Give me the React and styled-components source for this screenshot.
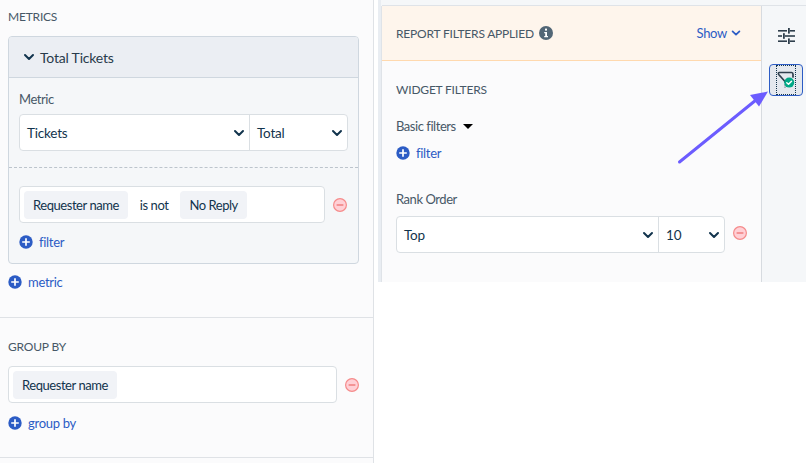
import React from 'react';
import styled, { createGlobalStyle } from 'styled-components';

const Global = createGlobalStyle`
  html, body { margin: 0; padding: 0; background: #fff; }
  body { font-family: Lato, "Liberation Sans", sans-serif; color: #12344d; }
  * { box-sizing: border-box; }
`;

const Page = styled.div`
  position: relative;
  width: 806px;
  height: 463px;
  overflow: hidden;
  display: grid;
  grid-template-columns: 374px 1fr;
  background: #fff;
`;
const LeftPanel = styled.aside`
  background: #fbfbfc;
  border-right: 1px solid #dfe2e6;
  height: 463px;
`;
const Section = styled.section`
  padding: ${p => p.$pad};
  height: ${p => p.$h}px;
  border-bottom: 1px solid #dfe2e6;
`;
const Heading = styled.h3`
  margin: 0;
  font-size: 12px;
  font-weight: 400;
  letter-spacing: -0.2px;
  line-height: 18px;
  color: #475867;
  text-transform: uppercase;
`;
const Card = styled.div`
  margin-top: 10px;
  width: 351px;
  height: 228px;
  border: 1px solid #cfd7df;
  border-radius: 4px;
  background: #f5f7f9;
  overflow: hidden;
`;
const CardHead = styled.div`
  height: 41px;
  background: #ebeef3;
  border-bottom: 1px solid #cfd7df;
  display: flex;
  align-items: center;
  gap: 4px;
  padding-left: 13px;
  font-size: 14px;
  letter-spacing: -0.2px;
  color: #283b4b;
`;
const CardBody = styled.div`
  padding: 12px 10px 0;
  height: 90px;
  border-bottom: 1px dashed #bcc4cc;
`;
const FieldLabel = styled.div`
  font-size: 13px;
  letter-spacing: -0.45px;
  line-height: 18px;
  color: #475867;
  margin-top: ${p => p.$mt ?? 0}px;
`;
const SelectGroup = styled.div`
  margin-top: ${p => p.$mt ?? 0}px;
  width: ${p => p.$w}px;
  height: 37px;
  display: flex;
  background: #fff;
  border: 1px solid #dadfe3;
  border-radius: 4px;
`;
const SelectCell = styled.div`
  flex: ${p => (p.$w ? `0 0 ${p.$w}px` : 1)};
  display: flex;
  align-items: center;
  justify-content: space-between;
  padding: 0 3px 0 7px;
  font-size: 13.5px;
  letter-spacing: -0.2px;
  color: #12344d;
  & + & { border-left: 1px solid #dadfe3; }
`;
const FilterRow = styled.div`
  display: flex;
  align-items: center;
  gap: 8px;
  margin-top: ${p => p.$mt ?? 0}px;
`;
const TokenBox = styled.div`
  width: ${p => p.$w}px;
  height: 37px;
  display: flex;
  align-items: center;
  padding: 0 4px;
  background: #fff;
  border: 1px solid #dadfe3;
  border-radius: 4px;
  font-size: 13px;
  letter-spacing: -0.45px;
  color: #12344d;
`;
const Chip = styled.span`
  height: 28px;
  display: inline-flex;
  align-items: center;
  padding: 0 9px;
  background: #f1f3f7;
  border-radius: 4px;
`;
const Operator = styled.span`
  padding: 0 12px;
`;
const AddLink = styled.div`
  display: flex;
  align-items: center;
  gap: 6px;
  margin-top: ${p => p.$mt ?? 0}px;
  height: 18px;
  font-size: 13px;
  letter-spacing: -0.3px;
  color: #2c5cc5;
`;
const Nested = styled.div`
  padding: 18px 10px 0;
`;
const MainColumn = styled.main`
  height: 282px;
  background: linear-gradient(90deg, #fff 0 4px, #e9edf2 4px 7px, #f5f7f9 7px);
  padding-left: 7px;
  display: flex;
  flex-direction: column;
`;
const TopStrip = styled.div`
  height: 6px;
  flex: none;
  background: #f5f7f9;
  border-bottom: 1px solid #dfe3e8;
  margin-left: 1px;
`;
const MainRow = styled.div`
  flex: 1;
  display: grid;
  grid-template-columns: 381px 1fr;
  min-height: 0;
`;
const FilterPanel = styled.div`
  background: #fbfbfc;
  border-left: 1px solid #dfe3e8;
  border-right: 1px solid #d7dbe0;
  min-height: 0;
`;
const Banner = styled.div`
  height: 55px;
  background: #fef5ec;
  border-bottom: 1px solid #ffd9ae;
  display: flex;
  align-items: center;
  justify-content: space-between;
  padding: 0 19px 0 14px;
`;
const BannerTitle = styled.div`
  display: flex;
  align-items: center;
  gap: 5px;
  font-size: 12px;
  letter-spacing: -0.2px;
  color: #475867;
`;
const ShowLink = styled.div`
  display: flex;
  align-items: center;
  gap: 3px;
  font-size: 13px;
  letter-spacing: -0.3px;
  color: #2c5cc5;
`;
const PanelBody = styled.div`
  padding: 20px 14px 0;
`;
const BasicFilters = styled.div`
  display: flex;
  align-items: center;
  gap: 7px;
  margin-top: 18px;
  font-size: 13px;
  letter-spacing: -0.45px;
  line-height: 18px;
  color: #475867;
`;
const Caret = styled.span`
  width: 0;
  height: 0;
  border-left: 5px solid transparent;
  border-right: 5px solid transparent;
  border-top: 5px solid #000;
`;
const RemoveSlot = styled.span`
  display: flex;
  margin-bottom: 3px;
`;
const Rail = styled.div`
  background: #f5f7f9;
  display: flex;
  flex-direction: column;
  align-items: center;
  padding: 22px 0 0 4px;
  gap: 20px;
`;
const RailButton = styled.div`
  width: 34px;
  height: 32px;
  flex: none;
  display: flex;
  justify-content: center;
  border: 1px solid #2c5cc5;
  border-radius: 4px;
  background: #e4e8ee;
`;
const FocusRing = styled.div`
  width: 20px;
  height: 30px;
  display: flex;
  align-items: center;
  justify-content: center;
  border: 1px dotted #12344d;
`;
const ArrowOverlay = styled.svg`
  position: absolute;
  left: 670px;
  top: 85px;
  pointer-events: none;
`;

const Chevron = ({ size = 14, color = '#12344d' }) => (
  <svg width={size} height={size} viewBox="0 0 14 14" fill="none" stroke={color} strokeWidth="2" strokeLinecap="round" strokeLinejoin="round" style={{ flex: 'none' }}>
    <path d="M3 5l4 4 4-4" />
  </svg>
);
const Plus = () => (
  <svg width="14" height="14" viewBox="0 0 14 14" style={{ flex: 'none' }}>
    <circle cx="7" cy="7" r="6.7" fill="#2c5cc5" />
    <path d="M3.2 7h7.6M7 3.2v7.6" stroke="#fff" strokeWidth="1.7" />
  </svg>
);
const Remove = () => (
  <svg width="14" height="14" viewBox="0 0 14 14" style={{ flex: 'none' }}>
    <circle cx="7" cy="7" r="6.4" fill="#ffd0d6" stroke="#f58b8b" strokeWidth="1.2" />
    <path d="M3.6 7h6.8" stroke="#f07f7f" strokeWidth="1.5" />
  </svg>
);
const Info = () => (
  <svg width="14" height="14" viewBox="0 0 14 14">
    <circle cx="7" cy="7" r="7" fill="#526676" />
    <rect x="6" y="2.6" width="2" height="2" fill="#fff" />
    <path d="M5.2 6h2.8v4h1v1.2H5.2V10h1V7.2h-1z" fill="#fff" />
  </svg>
);
const Sliders = () => (
  <svg width="17" height="16" viewBox="0 0 17 16" fill="#2f3f4d" style={{ flex: 'none' }}>
    <rect x="0" y="2" width="9" height="1.6" />
    <rect x="12" y="2" width="5" height="1.6" />
    <rect x="10" y="0" width="1.8" height="5.6" />
    <rect x="0" y="7.2" width="4" height="1.6" />
    <rect x="7" y="7.2" width="10" height="1.6" />
    <rect x="5" y="5.2" width="1.8" height="5.6" />
    <rect x="0" y="12.4" width="9" height="1.6" />
    <rect x="12" y="12.4" width="5" height="1.6" />
    <rect x="10" y="10.4" width="1.8" height="5.6" />
  </svg>
);
const FunnelCheck = () => (
  <svg width="18" height="20" viewBox="0 0 18 20" fill="none">
    <path d="M2.5 2.5H14.5C15.6 2.5 16 3.2 16 4.2V7M2.5 2.5C1.4 2.5 1 3.6 1.7 4.5L8 11.5" stroke="#2f3f4d" strokeWidth="1.7" strokeLinecap="round" strokeLinejoin="round" />
    <path d="M8 12v5.5" stroke="#2f3f4d" strokeWidth="1.2" strokeDasharray="1 1.4" />
    <circle cx="12.2" cy="12.6" r="5" fill="#00a886" />
    <path d="M9.8 12.8l1.7 1.5 3-3" stroke="#fff" strokeWidth="1.5" strokeLinecap="round" strokeLinejoin="round" />
  </svg>
);

export default function App() {
  return (
    <Page>
      <Global />
      <LeftPanel>
        <Section $h={318} $pad="8px 14px 0 8px">
          <Heading>Metrics</Heading>
          <Card>
            <CardHead><Chevron />Total Tickets</CardHead>
            <CardBody>
              <FieldLabel>Metric</FieldLabel>
              <SelectGroup $w={329} $mt={6}>
                <SelectCell $w={229}>Tickets<Chevron /></SelectCell>
                <SelectCell>Total<Chevron /></SelectCell>
              </SelectGroup>
            </CardBody>
            <Nested>
              <FilterRow>
                <TokenBox $w={306}><Chip>Requester name</Chip><Operator>is not</Operator><Chip>No Reply</Chip></TokenBox>
                <Remove />
              </FilterRow>
              <AddLink $mt={10}><Plus />filter</AddLink>
            </Nested>
          </Card>
          <AddLink $mt={9}><Plus />metric</AddLink>
        </Section>
        <Section $h={140} $pad="20px 14px 0 8px">
          <Heading>Group by</Heading>
          <FilterRow $mt={10}>
            <TokenBox $w={329}><Chip>Requester name</Chip></TokenBox>
            <Remove />
          </FilterRow>
          <AddLink $mt={11}><Plus />group by</AddLink>
        </Section>
      </LeftPanel>
      <MainColumn>
        <TopStrip />
        <MainRow>
          <FilterPanel>
            <Banner>
              <BannerTitle>REPORT FILTERS APPLIED <Info /></BannerTitle>
              <ShowLink>Show <Chevron size={12} color="#2c5cc5" /></ShowLink>
            </Banner>
            <PanelBody>
              <Heading>Widget filters</Heading>
              <BasicFilters>Basic filters <Caret /></BasicFilters>
              <AddLink $mt={9}><Plus />filter</AddLink>
              <FieldLabel $mt={28}>Rank Order</FieldLabel>
              <FilterRow $mt={8}>
                <SelectGroup $w={329}>
                  <SelectCell $w={261}>Top<Chevron /></SelectCell>
                  <SelectCell>10<Chevron /></SelectCell>
                </SelectGroup>
                <RemoveSlot><Remove /></RemoveSlot>
              </FilterRow>
            </PanelBody>
          </FilterPanel>
          <Rail>
            <Sliders />
            <RailButton><FocusRing><FunnelCheck /></FocusRing></RailButton>
          </Rail>
        </MainRow>
      </MainColumn>
      <ArrowOverlay width="100" height="90" viewBox="0 0 100 90">
        <path d="M9.5 77L86 15" stroke="#6c5cff" strokeWidth="3" strokeLinecap="round" />
        <path d="M98 6.5L80 10L89 21.5Z" fill="#6c5cff" />
      </ArrowOverlay>
    </Page>
  );
}
